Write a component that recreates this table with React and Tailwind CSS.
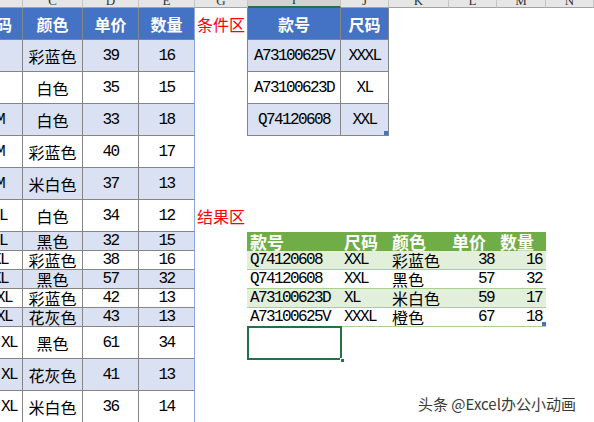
import React from 'react';

const cjk = "[font-family:'Noto_Sans_CJK_SC',sans-serif]";
const mono = "[font-family:'Liberation_Mono','Noto_Sans_CJK_SC',monospace] tracking-[-1.6px]";

// column header strip (only the bottom edge of the letters shows)
const cols = [
  { w: 'w-[23px]', l: 'B' },
  { w: 'w-[60px]', l: 'C' },
  { w: 'w-[56px]', l: 'D' },
  { w: 'w-[56px]', l: 'E' },
  { w: 'w-[53px]', l: 'G' },
  { w: 'w-[93px]', l: 'I', on: true },
  { w: 'w-[48px]', l: 'J' },
  { w: 'w-[60px]', l: 'K' },
  { w: 'w-[48px]', l: 'L' },
  { w: 'w-[49px]', l: 'M' },
  { w: 'w-[48px]', l: 'N' },
];

const rows = [
  { h: 'h-[32px]', head: true, b: '尺码', bpr: 'pr-[10px]', c: '颜色', d: '单价', e: '数量', g: '条件区', cond: ['款号', '尺码'] },
  { h: 'h-[32px]', alt: true, c: '彩蓝色', d: '39', e: '16', cond: ['A73100625V', 'XXXL'] },
  { h: 'h-[32px]', c: '白色', d: '35', e: '15', cond: ['A73100623D', 'XL'] },
  { h: 'h-[32px]', alt: true, b: 'M', bpr: 'pr-[18px]', c: '白色', d: '33', e: '18', cond: ['Q74120608', 'XXL'], last: true },
  { h: 'h-[32px]', b: 'M', bpr: 'pr-[18px]', c: '彩蓝色', d: '40', e: '17' },
  { h: 'h-[32px]', alt: true, b: 'M', bpr: 'pr-[18px]', c: '米白色', d: '37', e: '13' },
  { h: 'h-[32px]', b: 'L', bpr: 'pr-[15px]', c: '白色', d: '34', e: '12', g: '结果区' },
  { h: 'h-[19px]', alt: true, b: 'L', bpr: 'pr-[15px]', c: '黑色', d: '32', e: '15', res: 'head' },
  { h: 'h-[19px]', b: 'XL', bpr: 'pr-[14px]', c: '彩蓝色', d: '38', e: '16', res: ['Q74120608', 'XXL', '彩蓝色', '38', '16'], resAlt: true },
  { h: 'h-[19px]', alt: true, b: 'XL', bpr: 'pr-[14px]', c: '黑色', d: '57', e: '32', res: ['Q74120608', 'XXL', '黑色', '57', '32'] },
  { h: 'h-[19px]', b: 'XL', bpr: 'pr-[10px]', c: '彩蓝色', d: '42', e: '13', res: ['A73100623D', 'XL', '米白色', '59', '17'], resAlt: true },
  { h: 'h-[19px]', alt: true, b: 'XL', bpr: 'pr-[10px]', c: '花灰色', d: '43', e: '13', res: ['A73100625V', 'XXXL', '橙色', '67', '18'], resLast: true },
  { h: 'h-[32px]', b: 'XL', bpr: 'pr-[5px]', c: '黑色', d: '61', e: '34', sel: true },
  { h: 'h-[32px]', alt: true, b: 'XL', bpr: 'pr-[5px]', c: '花灰色', d: '41', e: '13' },
  { h: 'h-[32px]', b: 'XL', bpr: 'pr-[5px]', c: '米白色', d: '36', e: '14' },
];

const isLatin = (s) => /^[A-Z0-9]+$/.test(s);

function Txt({ s, bold }) {
  if (isLatin(s)) return <span className={`${mono} text-[16px] whitespace-nowrap shrink-0`}>{s}</span>;
  return <span className={`text-[16px] whitespace-nowrap shrink-0 ${bold ? 'font-bold' : ''}`}>{s}</span>;
}

function RightSide({ r }) {
  if (r.cond) {
    const bg = r.head ? 'bg-[#4472c4] text-white' : r.alt ? 'bg-[#d9e1f2]' : 'bg-white';
    return (
      <>
        <div className={`w-[94px] h-full shrink-0 flex items-center justify-center border-l border-r border-b border-[#858585] ${bg}`}>
          <Txt s={r.cond[0]} bold={r.head} />
        </div>
        <div className={`relative w-[48px] h-full shrink-0 flex items-center justify-center border-r border-b border-[#858585] ${bg}`}>
          <Txt s={r.cond[1]} bold={r.head} />
          {r.last && <div className="absolute right-0 bottom-0 w-[4px] h-[4px] bg-[#4472c4]" />}
        </div>
      </>
    );
  }
  if (r.res === 'head') {
    const hd = 'h-full shrink-0 flex items-center pl-[3px] bg-[#70ad47] text-white font-bold text-[17px]';
    return (
      <>
        <div className={`w-[94px] ${hd}`}>款号</div>
        <div className={`w-[48px] ${hd}`}>尺码</div>
        <div className={`w-[60px] ${hd}`}>颜色</div>
        <div className={`w-[48px] ${hd}`}>单价</div>
        <div className={`w-[49px] ${hd}`}>数量</div>
      </>
    );
  }
  if (r.res) {
    const bg = r.resAlt ? 'bg-[#e2efda]' : 'bg-white';
    const c = `h-full shrink-0 flex items-center border-b border-[#a9d08e] ${bg}`;
    return (
      <>
        <div className={`w-[94px] pl-[3px] ${c}`}><Txt s={r.res[0]} /></div>
        <div className={`w-[48px] pl-[3px] ${c}`}><Txt s={r.res[1]} /></div>
        <div className={`w-[60px] pl-[3px] ${c}`}><Txt s={r.res[2]} /></div>
        <div className={`w-[48px] pr-[3px] justify-end ${c}`}><Txt s={r.res[3]} /></div>
        <div className={`relative w-[49px] pr-[4px] justify-end ${c}`}>
          <Txt s={r.res[4]} />
          {r.resLast && <div className="absolute right-0 bottom-0 w-[4px] h-[4px] bg-[#4472c4]" />}
        </div>
      </>
    );
  }
  if (r.sel) {
    return (
      <div className="relative w-[94px] h-full shrink-0">
        <div className="absolute left-0 top-[-1px] w-[95px] h-[34px] border-2 border-[#217346]" />
        <div className="absolute right-[-4px] bottom-[-4px] w-[5px] h-[5px] bg-[#217346] border border-white" />
      </div>
    );
  }
  return null;
}

function Row({ r }) {
  const bg = r.head ? 'bg-[#4472c4] text-white' : r.alt ? 'bg-[#d9e1f2]' : 'bg-white';
  const grid = 'h-full shrink-0 flex items-center border-b border-r border-[#858585]';
  return (
    <div className={`${r.h} flex leading-none`}>
      <div className={`w-[23px] overflow-hidden justify-end ${r.bpr || ''} ${grid} ${bg}`}>
        {r.b && <Txt s={r.b} bold={r.head} />}
      </div>
      <div className={`w-[60px] justify-center ${grid} ${bg}`}><Txt s={r.c} bold={r.head} /></div>
      <div className={`w-[56px] justify-center ${grid} ${bg}`}><Txt s={r.d} bold={r.head} /></div>
      <div className={`w-[56px] justify-center h-full shrink-0 flex items-center border-b border-r border-b-[#858585] border-r-[#8eaadb] ${bg}`}>
        <Txt s={r.e} bold={r.head} />
      </div>
      <div className="w-[52px] h-full shrink-0 flex items-center pl-[2px] text-[#ff0000] text-[16px]">{r.g}</div>
      <RightSide r={r} />
    </div>
  );
}

export default function App() {
  return (
    <div className={`relative w-[594px] h-[422px] overflow-hidden bg-white text-black ${cjk}`}>
      <div className="flex h-[8px] bg-[#e6e6e6]">
        {cols.map((c) => (
          <div
            key={c.l}
            className={`${c.w} shrink-0 h-full flex items-end justify-center overflow-hidden border-r border-r-[#c4c4c4] ${
              c.on ? 'bg-[#d2d2d2] border-b-2 border-b-[#217346]' : 'border-b border-b-[#a3a3a3]'
            }`}
          >
            <span className="text-[13px] leading-[13px] text-[#333] [font-family:'Liberation_Serif',serif] shrink-0">
              {c.l === 'B' ? '' : c.l}
            </span>
          </div>
        ))}
      </div>
      {rows.map((r, i) => (
        <Row key={i} r={r} />
      ))}
      <div className="absolute left-[418px] top-[393px] text-[15px] text-[#3a3a3a] whitespace-nowrap [text-shadow:0_0_2px_#fff,0_0_2px_#fff]">
        头条 @Excel办公小动画
      </div>
    </div>
  );
}
